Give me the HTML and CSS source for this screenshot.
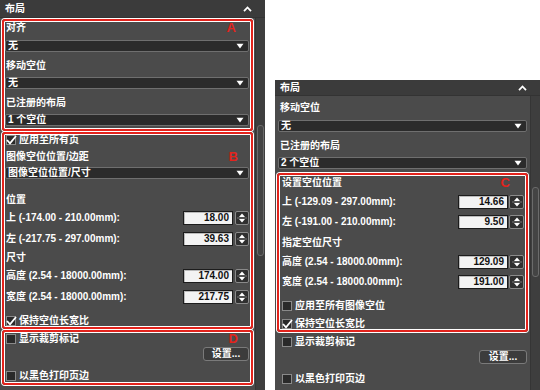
FILE: index.html
```html
<!DOCTYPE html>
<html>
<head>
  <meta charset="utf-8">
  <link rel="stylesheet" href="styles.css">
</head>
<body>
  <div class="page">

    <!-- left panel -->
    <div class="panel panel-left">
      <div class="panel-head">
        <span>布局</span>
        <svg class="caret" width="9" height="6" viewBox="0 0 9 6"><polyline points="1,5.2 4.5,1.4 8,5.2" fill="none" stroke="#fff" stroke-width="1.7"/></svg>
      </div>
      <div class="panel-body">
        <div class="panel-main">

          <div class="mark-box box-a">
            <div class="lbl first"><span>对齐</span><b class="tag">A</b></div>
            <div class="select"><span>无</span><svg width="8" height="6" viewBox="0 0 8 6"><polygon points="0.5,0.8 7.5,0.8 4,5.4" fill="#fff"/></svg></div>
            <div class="lbl"><span>移动空位</span></div>
            <div class="select"><span>无</span><svg width="8" height="6" viewBox="0 0 8 6"><polygon points="0.5,0.8 7.5,0.8 4,5.4" fill="#fff"/></svg></div>
            <div class="lbl"><span>已注册的布局</span></div>
            <div class="select"><span>1 个空位</span><svg width="8" height="6" viewBox="0 0 8 6"><polygon points="0.5,0.8 7.5,0.8 4,5.4" fill="#fff"/></svg></div>
          </div>

          <div class="mark-box box-b">
            <div class="check on">
              <span class="box"><svg width="11" height="10" viewBox="0 0 11 10"><polyline points="1,5 4,8.3 10,1" fill="none" stroke="#fff" stroke-width="1.8"/></svg></span>
              <span>应用至所有页</span>
            </div>
            <div class="lbl sub"><span>图像空位位置/边距</span><b class="tag">B</b></div>
            <div class="select tight"><span>图像空位位置/尺寸</span><svg width="8" height="6" viewBox="0 0 8 6"><polygon points="0.5,0.8 7.5,0.8 4,5.4" fill="#fff"/></svg></div>
            <div class="lbl group"><span>位置</span></div>
            <div class="num-row first-num">
              <span class="num-label">上 (-174.00 - 210.00mm):</span>
              <span class="num-input">18.00</span>
              <span class="spin"><svg width="12" height="12" viewBox="0 0 12 12"><polygon points="3,5 9,5 6,1.6" fill="#fff"/><line x1="1" y1="6" x2="11" y2="6" stroke="#888" stroke-width="0.8"/><polygon points="3,7 9,7 6,10.4" fill="#fff"/></svg></span>
            </div>
            <div class="num-row">
              <span class="num-label">左 (-217.75 - 297.00mm):</span>
              <span class="num-input">39.63</span>
              <span class="spin"><svg width="12" height="12" viewBox="0 0 12 12"><polygon points="3,5 9,5 6,1.6" fill="#fff"/><line x1="1" y1="6" x2="11" y2="6" stroke="#888" stroke-width="0.8"/><polygon points="3,7 9,7 6,10.4" fill="#fff"/></svg></span>
            </div>
            <div class="lbl size"><span>尺寸</span></div>
            <div class="num-row first-num">
              <span class="num-label">高度 (2.54 - 18000.00mm):</span>
              <span class="num-input">174.00</span>
              <span class="spin"><svg width="12" height="12" viewBox="0 0 12 12"><polygon points="3,5 9,5 6,1.6" fill="#fff"/><line x1="1" y1="6" x2="11" y2="6" stroke="#888" stroke-width="0.8"/><polygon points="3,7 9,7 6,10.4" fill="#fff"/></svg></span>
            </div>
            <div class="num-row">
              <span class="num-label">宽度 (2.54 - 18000.00mm):</span>
              <span class="num-input">217.75</span>
              <span class="spin"><svg width="12" height="12" viewBox="0 0 12 12"><polygon points="3,5 9,5 6,1.6" fill="#fff"/><line x1="1" y1="6" x2="11" y2="6" stroke="#888" stroke-width="0.8"/><polygon points="3,7 9,7 6,10.4" fill="#fff"/></svg></span>
            </div>
            <div class="check on last-b">
              <span class="box"><svg width="11" height="10" viewBox="0 0 11 10"><polyline points="1,5 4,8.3 10,1" fill="none" stroke="#fff" stroke-width="1.8"/></svg></span>
              <span>保持空位长宽比</span>
            </div>
          </div>

          <div class="mark-box box-d">
            <div class="check row-d"><span class="box"></span><span>显示裁剪标记</span><b class="tag">D</b></div>
            <div class="btn-row"><span class="btn">设置...</span></div>
            <div class="check print"><span class="box"></span><span>以黑色打印页边</span></div>
          </div>

        </div>
        <div class="scroll"><div class="thumb thumb-left"></div></div>
      </div>
    </div>

    <!-- right panel -->
    <div class="panel panel-right">
      <div class="panel-head">
        <span>布局</span>
        <svg class="caret" width="9" height="6" viewBox="0 0 9 6"><polyline points="1,5.2 4.5,1.4 8,5.2" fill="none" stroke="#fff" stroke-width="1.7"/></svg>
      </div>
      <div class="panel-body">
        <div class="panel-main">
          <div class="lbl out top"><span>移动空位</span></div>
          <div class="select out-sel"><span>无</span><svg width="8" height="6" viewBox="0 0 8 6"><polygon points="0.5,0.8 7.5,0.8 4,5.4" fill="#fff"/></svg></div>
          <div class="lbl out"><span>已注册的布局</span></div>
          <div class="select out-sel"><span>2 个空位</span><svg width="8" height="6" viewBox="0 0 8 6"><polygon points="0.5,0.8 7.5,0.8 4,5.4" fill="#fff"/></svg></div>

          <div class="mark-box box-c">
            <div class="lbl c-first"><span>设置空位位置</span><b class="tag">C</b></div>
            <div class="num-row c-num">
              <span class="num-label">上 (-129.09 - 297.00mm):</span>
              <span class="num-input">14.66</span>
              <span class="spin"><svg width="12" height="12" viewBox="0 0 12 12"><polygon points="3,5 9,5 6,1.6" fill="#fff"/><line x1="1" y1="6" x2="11" y2="6" stroke="#888" stroke-width="0.8"/><polygon points="3,7 9,7 6,10.4" fill="#fff"/></svg></span>
            </div>
            <div class="num-row c-num">
              <span class="num-label">左 (-191.00 - 210.00mm):</span>
              <span class="num-input">9.50</span>
              <span class="spin"><svg width="12" height="12" viewBox="0 0 12 12"><polygon points="3,5 9,5 6,1.6" fill="#fff"/><line x1="1" y1="6" x2="11" y2="6" stroke="#888" stroke-width="0.8"/><polygon points="3,7 9,7 6,10.4" fill="#fff"/></svg></span>
            </div>
            <div class="lbl c-size"><span>指定空位尺寸</span></div>
            <div class="num-row c-num">
              <span class="num-label">高度 (2.54 - 18000.00mm):</span>
              <span class="num-input">129.09</span>
              <span class="spin"><svg width="12" height="12" viewBox="0 0 12 12"><polygon points="3,5 9,5 6,1.6" fill="#fff"/><line x1="1" y1="6" x2="11" y2="6" stroke="#888" stroke-width="0.8"/><polygon points="3,7 9,7 6,10.4" fill="#fff"/></svg></span>
            </div>
            <div class="num-row c-num">
              <span class="num-label">宽度 (2.54 - 18000.00mm):</span>
              <span class="num-input">191.00</span>
              <span class="spin"><svg width="12" height="12" viewBox="0 0 12 12"><polygon points="3,5 9,5 6,1.6" fill="#fff"/><line x1="1" y1="6" x2="11" y2="6" stroke="#888" stroke-width="0.8"/><polygon points="3,7 9,7 6,10.4" fill="#fff"/></svg></span>
            </div>
            <div class="check c-all"><span class="box"></span><span>应用至所有图像空位</span></div>
            <div class="check on c-keep">
              <span class="box"><svg width="11" height="10" viewBox="0 0 11 10"><polyline points="1,5 4,8.3 10,1" fill="none" stroke="#fff" stroke-width="1.8"/></svg></span>
              <span>保持空位长宽比</span>
            </div>
          </div>

          <div class="check out-check trim"><span class="box"></span><span>显示裁剪标记</span></div>
          <div class="btn-row out-btn"><span class="btn">设置...</span></div>
          <div class="check out-check print"><span class="box"></span><span>以黑色打印页边</span></div>
        </div>
        <div class="scroll"><div class="thumb thumb-right"></div></div>
      </div>
    </div>

  </div>
</body>
</html>
```

FILE: styles.css
```css
* {
  box-sizing: border-box;
}
body {
  margin: 0;
  width: 540px;
  height: 390px;
  overflow: hidden;
  background: #fff;
  font-family: "Liberation Sans", "Noto Sans CJK SC", sans-serif;
  font-size: 10px;
  font-weight: bold;
  color: #fff;
}
.page {
  display: flex;
  align-items: flex-start;
  gap: 10px;
}
.panel {
  width: 265px;
  background: #4b4b4b;
  display: flex;
  flex-direction: column;
}
.panel-left {
  height: 390px;
}
.panel-right {
  height: 310px;
  margin-top: 80px;
}
.panel-head {
  height: 18px;
  flex-shrink: 0;
  background: #3b3b3b;
  border-bottom: 1px solid #333;
  display: flex;
  align-items: center;
  justify-content: space-between;
  padding: 0 13px 0 5px;
  line-height: 12px;
}
.panel-right .panel-head {
  height: 16px;
  padding-right: 13px;
}
.panel-body {
  flex: 1;
  display: flex;
}
.panel-main {
  width: 255px;
  padding: 0 2px;
}
.scroll {
  width: 10px;
  background: #3e3e3e;
  border-left: 1px solid #353535;
  padding-left: 1px;
}
.thumb {
  width: 7px;
  border: 1px solid #6b6b6b;
  border-radius: 3px;
  background: #444;
}
.thumb-left {
  margin-top: 107px;
  height: 131px;
}
.thumb-right {
  margin-top: 91px;
  height: 90px;
}

/* red annotation boxes */
.mark-box {
  border: 2px solid #e3231c;
  border-radius: 3px;
  box-shadow: 0 0 0 1px #fff, inset 0 0 0 1px #fff;
  padding: 0 2px 0 1px;
}
.box-a {
  margin-top: 1px;
  padding-bottom: 3px;
}
.box-b {
  margin-top: 1px;
}
.box-d {
  margin-top: 1px;
  padding-bottom: 1px;
}
.box-c {
  margin-top: 4px;
  padding-left: 2px;
}
.tag {
  color: #e3231c;
  font-size: 13px;
  line-height: 12px;
  margin-left: auto;
  margin-right: 11px;
}
.box-c .tag {
  margin-right: 14px;
}

/* labels */
.lbl {
  display: flex;
  align-items: center;
  line-height: 12px;
  padding: 8px 0 5px 1px;
}
.lbl.first {
  padding-top: 1px;
  padding-bottom: 6px;
}
.lbl.first .tag {
  margin-right: 13px;
}
.lbl.sub {
  padding-top: 5px;
  padding-bottom: 4px;
}
.lbl.group {
  padding-top: 15px;
  padding-bottom: 0;
}
.lbl.size {
  padding-top: 6px;
  padding-bottom: 0;
}
.lbl.out {
  padding-left: 3px;
}
.lbl.out.top {
  padding-top: 6px;
  padding-bottom: 6px;
}
.lbl.c-first {
  padding-top: 2px;
  padding-bottom: 0;
}
.lbl.c-size {
  padding-top: 8px;
  padding-bottom: 0;
}

/* dropdowns */
.select {
  height: 12px;
  background: #2b2b2b;
  border: 1px solid #6f6f6f;
  border-radius: 2px;
  display: flex;
  align-items: center;
  justify-content: space-between;
  padding: 0 4px 0 2px;
  line-height: 10px;
}
.select.out-sel {
  margin: 0 1px;
}

/* number fields */
.num-row {
  display: flex;
  align-items: center;
  height: 14px;
  margin-top: 7px;
  padding-left: 1px;
}
.num-row.first-num {
  margin-top: 5px;
}
.num-row.c-num {
  margin-top: 6px;
}
.num-label {
  flex: 1;
  line-height: 12px;
}
.num-input {
  width: 50px;
  height: 14px;
  background: #f3f3f3;
  border: 1px solid #1c1c1c;
  box-shadow: inset 1px 1px 0 #bbb;
  color: #111;
  text-align: right;
  padding-right: 3px;
  line-height: 12px;
}
.spin {
  width: 14px;
  height: 14px;
  margin-left: 2px;
  background: #2f2f2f;
  border: 1px solid #8a8a8a;
  border-radius: 2px;
  display: flex;
  align-items: center;
  justify-content: center;
}
.c-num .spin {
  margin-left: 1px;
  width: 15px;
}

/* checkboxes */
.check {
  display: flex;
  align-items: center;
  height: 12px;
  line-height: 12px;
  padding-left: 1px;
}
.check .box {
  position: relative;
  width: 10px;
  height: 10px;
  margin-right: 3px;
  background: #2a2a2a;
  border: 1px solid #8a8a8a;
  flex-shrink: 0;
}
.check .box svg {
  position: absolute;
  left: -1px;
  top: -1px;
}
.check.last-b {
  margin-top: 11px;
}
.check.row-d {
  margin-top: 1px;
}
.check.print {
  margin-top: 9px;
}
.check.c-all {
  margin-top: 11px;
}
.check.c-keep {
  margin-top: 6px;
}
.check.out-check {
  padding-left: 5px;
}
.check.trim {
  margin-top: 4px;
}

/* button */
.btn-row {
  display: flex;
  justify-content: flex-end;
  margin-top: 2px;
}
.out-btn {
  padding-right: 1px;
}
.btn {
  width: 46px;
  height: 14px;
  background: #3c3c3c;
  border: 1px solid #7a7a7a;
  border-radius: 3px;
  display: flex;
  align-items: center;
  justify-content: center;
  line-height: 12px;
}
.out-btn .btn {
  width: 48px;
}
```
